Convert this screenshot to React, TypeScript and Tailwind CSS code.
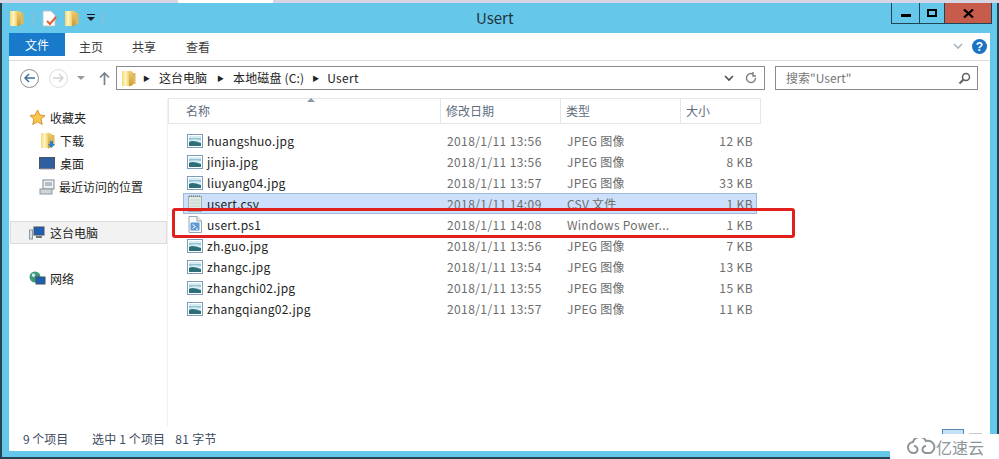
const font = { fontFamily: '"Noto Sans CJK SC", sans-serif' };

type Row = { name: string; date: string; type: string; size: string; icon?: "jpg" | "csv" | "ps1"; selected?: boolean };

const rows: Row[] = [
  { name: "huangshuo.jpg", date: "2018/1/11 13:56", type: "JPEG 图像", size: "12 KB" },
  { name: "jinjia.jpg", date: "2018/1/11 13:56", type: "JPEG 图像", size: "8 KB" },
  { name: "liuyang04.jpg", date: "2018/1/11 13:57", type: "JPEG 图像", size: "33 KB" },
  { name: "usert.csv", date: "2018/1/11 14:09", type: "CSV 文件", size: "1 KB", icon: "csv", selected: true },
  { name: "usert.ps1", date: "2018/1/11 14:08", type: "Windows Power...", size: "1 KB", icon: "ps1" },
  { name: "zh.guo.jpg", date: "2018/1/11 13:56", type: "JPEG 图像", size: "7 KB" },
  { name: "zhangc.jpg", date: "2018/1/11 13:54", type: "JPEG 图像", size: "13 KB" },
  { name: "zhangchi02.jpg", date: "2018/1/11 13:55", type: "JPEG 图像", size: "15 KB" },
  { name: "zhangqiang02.jpg", date: "2018/1/11 13:57", type: "JPEG 图像", size: "11 KB" },
];

function FolderIcon({ arrow = false }: { arrow?: boolean }) {
  return (
    <svg width="15" height="17" viewBox="0 0 15 17" className="shrink-0">
      <defs>
        <linearGradient id="folderLeft" x1="0" y1="0" x2="1" y2="0">
          <stop offset="0" stopColor="#f5d774" />
          <stop offset="0.5" stopColor="#fff6c4" />
          <stop offset="1" stopColor="#f0cf6a" />
        </linearGradient>
        <linearGradient id="folderRight" x1="0" y1="0" x2="0" y2="1">
          <stop offset="0" stopColor="#efcf72" />
          <stop offset="1" stopColor="#c99b3a" />
        </linearGradient>
      </defs>
      <path d="M1 1h7v15H1z" fill="url(#folderLeft)" />
      <path d="M8 .5l4 1.500v13l-4 1.500z" fill="url(#folderRight)" />
      <path d="M12 3h2.500v11H12z" fill="#dcb95c" />
      {arrow ? <path d="M10 9h3v3h2l-3.500 4L8 12h2z" fill="#2f7fc9" /> : null}
    </svg>
  );
}

function ImageIcon() {
  return (
    <svg width="16" height="14" viewBox="0 0 16 14" className="shrink-0">
      <rect x="0.500" y="0.500" width="15" height="13" fill="#ffffff" stroke="#7f9db9" />
      <rect x="2" y="2" width="12" height="10" fill="#d6ecf2" />
      <path d="M2 8c3-2 6-1 12 1v3H2z" fill="#2c6f78" />
      <path d="M2 4h12v2c-4-1-8-1-12 0z" fill="#8fc4d2" />
    </svg>
  );
}

function CsvIcon() {
  return (
    <svg width="16" height="18" viewBox="0 0 16 18" className="shrink-0">
      <rect x="1.500" y="1.500" width="13" height="15" fill="#dfe9e6" stroke="#9fb0ad" />
      <path d="M2 1h12" stroke="#666" strokeDasharray="1 1" />
      <path d="M3 5h10M3 8h10M3 11h10" stroke="#c2d2ce" />
    </svg>
  );
}

function PsIcon() {
  return (
    <svg width="14" height="17" viewBox="0 0 14 17" className="shrink-0">
      <path d="M1 .5h8l4.500 4.500v11.500H1z" fill="#f7f9fb" stroke="#9aa5b1" />
      <path d="M9 .5v4.500h4.500" fill="#e4e9ee" stroke="#9aa5b1" />
      <rect x="2.500" y="6.500" width="9" height="8" rx="1" fill="#5a9bd5" />
      <path d="M4.500 8.500l3 2-3 2M8 13h2" stroke="#fff" fill="none" />
    </svg>
  );
}

function HeaderCell({ label, className }: { label: string; className: string }) {
  return (
    <div className={`flex items-center border-r border-[#e3e6ea] text-[12px] text-[#5f6d7e] ${className}`}>{label}</div>
  );
}

function TreeRow({ icon, label, className }: { icon: React.ReactNode; label: string; className: string }) {
  return (
    <div className={`flex h-[23px] items-center text-[12px] text-[#1e1e1e] ${className}`}>
      {icon}
      <span>{label}</span>
    </div>
  );
}

export default function App() {
  return (
    <div className="relative h-[459px] w-[999px] overflow-hidden bg-white" style={font}>
      {/* desktop strip behind the window */}
      <div className="flex h-[3px] bg-[#d6d6e4]">
        <div className="ml-[178px] w-[95px] bg-white" />
      </div>

      <div className="flex h-[456px] flex-col border-x-2 border-b-2 border-[#26414f] bg-[#65c7e9] pr-[7px] pb-[6px] pl-[7px]">
        {/* title bar */}
        <div className="-mr-[2px] flex h-[30px] shrink-0 items-start">
          <div className="flex h-[30px] items-center">
            <FolderIcon />
            <div className="ml-[8px] h-[13px] w-px bg-[#9bb8c6]" />
            <svg width="16" height="17" viewBox="0 0 16 17" className="ml-[9px] shrink-0">
              <path d="M1 1h8l4 4v11H1z" fill="#fff" stroke="#b9c4cc" />
              <path d="M5 11l3 3 6-7" stroke="#e4603a" strokeWidth="2" fill="none" />
            </svg>
            <div className="ml-[6px]"><FolderIcon /></div>
            <svg width="8" height="8" viewBox="0 0 8 8" className="ml-[8px]">
              <path d="M0 0h8v1H0zM0 3h8L4 7z" fill="#1a1a1a" />
            </svg>
            <div className="ml-[8px] h-[13px] w-px bg-[#9bb8c6]" />
          </div>
          <div className="flex-1 pt-[3px] pl-[372px] text-[15px] leading-[24px] text-[#22333d]">Usert</div>
          <div className="flex h-[21px] border border-t-0 border-[#1f4456]">
            <div className="flex w-[28px] items-center justify-center border-r border-[#1f4456]">
              <div className="mt-[5px] h-[3px] w-[10px] bg-black" />
            </div>
            <div className="flex w-[25px] items-center justify-center border-r border-[#1f4456]">
              <div className="h-[8px] w-[10px] border-2 border-black" />
            </div>
            <div className="flex w-[46px] items-center justify-center bg-[#c75c4d]">
              <svg width="11" height="9" viewBox="0 0 11 9"><path d="M1 .5l9 8M10 .5l-9 8" stroke="#000" strokeWidth="2.200" /></svg>
            </div>
          </div>
        </div>

        <div className="flex min-h-0 flex-1 flex-col bg-white">
          {/* ribbon tabs */}
          <div className="flex h-[28px] shrink-0 items-center border-b border-[#dadbdc] text-[12px] text-[#3a3a3a]">
            <div className="flex h-[23px] w-[56px] items-center justify-center self-start bg-[#1979ca] text-white">文件</div>
            <div className="ml-[14px]">主页</div>
            <div className="ml-[29px]">共享</div>
            <div className="ml-[30px]">查看</div>
            <svg width="12" height="8" viewBox="0 0 12 8" className="mr-[8px] ml-auto"><path d="M2 1l4 4 4-4" stroke="#a8b4be" strokeWidth="1.600" fill="none" /></svg>
            <div className="mr-[3px] flex h-[15px] w-[15px] items-center justify-center rounded-full bg-[#1b73c3] text-[12px] leading-none font-bold text-white" style={{ fontFamily: '"Liberation Sans", sans-serif' }}>?</div>
          </div>

          {/* address bar */}
          <div className="flex h-[37px] shrink-0 items-center pb-[3px]">
            <div className="ml-[11px] flex h-[19px] w-[19px] items-center justify-center rounded-full border border-[#8d8d8d]">
              <svg width="11" height="10" viewBox="0 0 11 10"><path d="M5 1L1 5l4 4M1 5h10" stroke="#3f6d9e" strokeWidth="1.500" fill="none" /></svg>
            </div>
            <div className="ml-[10px] flex h-[19px] w-[19px] items-center justify-center rounded-full border border-[#dedede]">
              <svg width="11" height="10" viewBox="0 0 11 10"><path d="M6 1l4 4-4 4M10 5H0" stroke="#d3d3d3" strokeWidth="1.500" fill="none" /></svg>
            </div>
            <svg width="8" height="5" viewBox="0 0 8 5" className="ml-[9px]"><path d="M0 0h8L4 4z" fill="#9a9a9a" /></svg>
            <svg width="11" height="13" viewBox="0 0 11 13" className="ml-[14px]"><path d="M5.500 1v12M1 5.500L5.500 1 10 5.500" stroke="#7a8288" strokeWidth="1.700" fill="none" /></svg>
            <div className="ml-[6px] flex h-[24px] w-[649px] items-center border border-[#8a8a8a] pl-[4px] text-[12px] text-[#222]">
              <FolderIcon />
              <span className="mr-[9px] ml-[7px] text-[7px]">▶</span>
              <span>这台电脑</span>
              <span className="mr-[9px] ml-[10px] text-[7px]">▶</span>
              <span className="tracking-[0.15px]">本地磁盘 (C:)</span>
              <span className="mr-[8px] ml-[8px] text-[7px]">▶</span>
              <span className="tracking-[0.3px]">Usert</span>
              <svg width="10" height="7" viewBox="0 0 10 7" className="ml-auto"><path d="M1 1l4 4 4-4" stroke="#4d4d4d" strokeWidth="1.600" fill="none" /></svg>
              <svg width="12" height="12" viewBox="0 0 12 12" className="mr-[7px] ml-[11px]"><path d="M10.500 6A4.500 4.500 0 1 1 8 2M8 0v4h3" stroke="#7f7f7f" strokeWidth="1.400" fill="none" /></svg>
            </div>
            <div className="ml-[10px] flex h-[24px] w-[203px] items-center border border-[#8a8a8a] pl-[10px] text-[12px] text-[#777]">
              <span>搜索"Usert"</span>
              <svg width="13" height="13" viewBox="0 0 13 13" className="mr-[6px] ml-auto"><circle cx="8" cy="5" r="3.500" stroke="#5f5f5f" strokeWidth="1.500" fill="none" /><path d="M5.500 7.500L1.500 11.500" stroke="#5f5f5f" strokeWidth="2" /></svg>
            </div>
          </div>

          <div className="flex min-h-0 flex-1">
            {/* navigation pane */}
            <div className="flex w-[159px] shrink-0 flex-col border-r border-[#f0f0f0] pt-[8px]">
              <TreeRow
                className="pl-[20px]"
                label="收藏夹"
                icon={<svg width="17" height="17" viewBox="0 0 17 17" className="mr-[4px]"><path d="M8.500 1l2.300 5 5.200.6-3.900 3.500 1.100 5.400-4.700-2.700-4.700 2.700 1.100-5.400L1 6.600 6.200 6z" fill="#f8c84c" stroke="#d9913a" /></svg>}
              />
              <TreeRow
                className="pl-[31px]"
                label="下载"
                icon={<div className="mr-[5px]"><FolderIcon arrow /></div>}
              />
              <TreeRow
                className="pl-[30px]"
                label="桌面"
                icon={<svg width="16" height="13" viewBox="0 0 16 13" className="mr-[5px]"><rect x="0.500" y="0.500" width="15" height="11" fill="#2f5f9e" stroke="#4a5560" /><path d="M1 12h14" stroke="#9aa5b1" /></svg>}
              />
              <TreeRow
                className="pl-[30px]"
                label="最近访问的位置"
                icon={<svg width="16" height="16" viewBox="0 0 16 16" className="mr-[4px]"><rect x="4" y="1" width="11" height="9" fill="#eef1f4" stroke="#7d8894" /><path d="M6 4h7M6 6h7" stroke="#7d8894" /><rect x="1" y="10" width="12" height="5" fill="#cfd4d9" stroke="#8e979f" /></svg>}
              />
              <TreeRow
                className="mt-[23px] ml-[1px] w-[157px] border border-[#dcdcdc] bg-[#f2f2f2] pl-[18px]"
                label="这台电脑"
                icon={<svg width="16" height="14" viewBox="0 0 16 14" className="mr-[5px]"><rect x="0.500" y="4" width="3" height="9" fill="#d9dde1" stroke="#8e979f" /><rect x="5" y="1" width="10" height="8" fill="#1c5fb5" stroke="#44515e" /><path d="M7 11h6" stroke="#6d7680" strokeWidth="2" /></svg>}
              />
              <TreeRow
                className="mt-[23px] pl-[20px]"
                label="网络"
                icon={<svg width="17" height="16" viewBox="0 0 17 16" className="mr-[4px]"><circle cx="6" cy="6" r="5.500" fill="#3c9a7a" /><path d="M3 3c2-1 4 0 3 2S2 6 3 3z" fill="#cfe8f5" /><rect x="7" y="6" width="9" height="7" fill="#1c5fb5" stroke="#44515e" /></svg>}
              />
            </div>

            {/* file list */}
            <div className="flex min-w-0 flex-1 flex-col">
              <div className="relative flex h-[26px] w-[593px] shrink-0 border-y border-l border-[#e3e6ea]">
                <HeaderCell label="名称" className="w-[272px] pl-[17px]" />
                <HeaderCell label="修改日期" className="w-[120px] pl-[5px]" />
                <HeaderCell label="类型" className="w-[120px] pl-[5px]" />
                <HeaderCell label="大小" className="flex-1 pl-[5px]" />
                <svg width="8" height="4" viewBox="0 0 8 4" className="absolute -top-[1px] left-[138px]"><path d="M4 0l4 4H0z" fill="#8a97a5" /></svg>
              </div>

              <div className="mt-[6px] ml-[15px] flex flex-col">
                {rows.map((row) => (
                  <div
                    key={row.name}
                    className={`flex h-[21px] w-[574px] items-center border text-[12px] text-[#6d6d6d] ${
                      row.selected ? "border-[#9db8db] bg-[#cce0fb]" : "border-transparent"
                    }`}
                  >
                    <div className="flex w-[263px] items-center pl-[3px] text-[#1e1e1e]">
                      <div className="flex w-[16px] justify-center">
                        {row.icon === "csv" ? <CsvIcon /> : row.icon === "ps1" ? <PsIcon /> : <ImageIcon />}
                      </div>
                      <span className="ml-[4px] tracking-[0.25px]">{row.name}</span>
                    </div>
                    <div className="w-[120px] tracking-[0.4px]">{row.date}</div>
                    <div className="w-[114px] tracking-[0.25px] whitespace-nowrap">{row.type}</div>
                    <div className="w-[72px] text-right tracking-[0.4px]">{row.size}</div>
                  </div>
                ))}
              </div>
            </div>
          </div>

          {/* status bar */}
          <div className="flex h-[25px] shrink-0 items-center text-[12px] text-[#3c4a63]">
            <div className="ml-[14px] w-[69px]">9 个项目</div>
            <div className="tracking-[0.15px]">选中 1 个项目</div>
            <div className="ml-[10px] tracking-[0.3px]">81 字节</div>
            <div className="mr-[8px] ml-auto flex items-start gap-[5px] self-start pt-[3px]">
              <div className="h-[14px] w-[22px] border border-[#5b88b5] bg-[#c4e1f7]" />
              <div className="mt-[4px] h-[10px] w-[13px] border border-[#c9c9c9]" />
            </div>
          </div>
        </div>
      </div>

      {/* red highlight box drawn on the screenshot */}
      <div className="absolute top-[208px] left-[172px] h-[30px] w-[623px] rounded-[3px] border-[3px] border-[#e0201c]" />

      {/* watermark */}
      <div className="absolute top-[434px] left-[890px] flex h-[25px] w-[109px] items-center bg-white pl-[17px] text-[16px] leading-[18px] text-[#8d9599]">
        <svg width="29" height="17" viewBox="0 0 29 17" className="shrink-0">
          <path d="M7 15a5.500 5.500 0 0 1-1-11 7 7 0 0 1 13 -1 6 6 0 0 1 4 12h-4a3.500 3.500 0 1 1 0-7 M7 15a3.500 3.500 0 1 0 0-7" stroke="#8d9599" strokeWidth="2" fill="none" />
        </svg>
        <span className="whitespace-nowrap">亿速云</span>
      </div>
    </div>
  );
}
